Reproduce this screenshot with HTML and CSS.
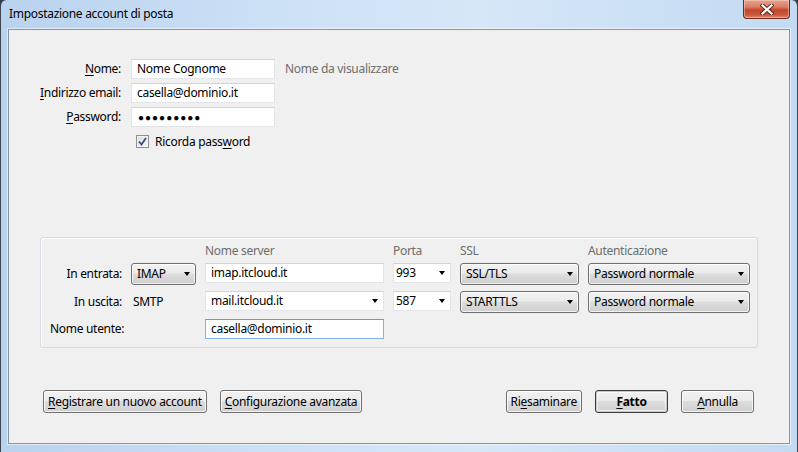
FILE: index.html
```html
<!DOCTYPE html>
<html lang="it">
<head>
<meta charset="utf-8">
<title>Impostazione account di posta</title>
<link rel="stylesheet" href="styles.css">
</head>
<body>
<div class="window">
  <div class="titlebar">
    <span class="title">Impostazione account di posta</span>
    <div class="close">
      <svg width="14" height="11" viewBox="0 0 14 11">
        <path d="M2.5 1.5 L11.5 9.5 M11.5 1.5 L2.5 9.5" stroke="#5a2418" stroke-width="4" stroke-linecap="square"/>
        <path d="M2.5 1.5 L11.5 9.5 M11.5 1.5 L2.5 9.5" stroke="#ffffff" stroke-width="2.2" stroke-linecap="square"/>
      </svg>
    </div>
  </div>
  <div class="client">
    <div class="identity">
      <span class="lbl"><u>N</u>ome:</span>
      <div class="field">Nome Cognome</div>
      <span class="hint">Nome da visualizzare</span>

      <span class="lbl"><u>I</u>ndirizzo email:</span>
      <div class="field">casella@dominio.it</div>
      <span></span>

      <span class="lbl"><u>P</u>assword:</span>
      <div class="field dots">●●●●●●●●●</div>
      <span></span>

      <span></span>
      <div class="check-row">
        <span class="checkbox">
          <svg width="9" height="9" viewBox="0 0 9 9"><path d="M1 4.5 L3.5 7.5 L8 1" fill="none" stroke="#3c4f86" stroke-width="1.8"/></svg>
        </span>
        <span>Ricorda pass<u>w</u>ord</span>
      </div>
    </div>

    <div class="server-box">
      <span></span>
      <span></span>
      <span class="head">Nome server</span>
      <span class="head">Porta</span>
      <span class="head">SSL</span>
      <span class="head">Autenticazione</span>

      <span class="lbl">In entrata:</span>
      <div class="select">IMAP<i class="arrow"></i></div>
      <div class="field">imap.itcloud.it</div>
      <div class="field combo port">993<i class="arrow"></i></div>
      <div class="select">SSL/TLS<i class="arrow"></i></div>
      <div class="select">Password normale<i class="arrow"></i></div>

      <span class="lbl">In uscita:</span>
      <span class="plain">SMTP</span>
      <div class="field combo">mail.itcloud.it<i class="arrow"></i></div>
      <div class="field combo port">587<i class="arrow"></i></div>
      <div class="select">STARTTLS<i class="arrow"></i></div>
      <div class="select">Password normale<i class="arrow"></i></div>

      <span class="lbl-wide">Nome utente:</span>
      <div class="field focused">casella@dominio.it</div>
    </div>

    <div class="buttons">
      <div class="btn-group">
        <div class="btn"><u>R</u>egistrare un nuovo account</div>
        <div class="btn"><u>C</u>onfigurazione avanzata</div>
      </div>
      <div class="btn-group">
        <div class="btn">Ri<u>e</u>saminare</div>
        <div class="btn default"><b><u>F</u>atto</b></div>
        <div class="btn"><u>A</u>nnulla</div>
      </div>
    </div>
  </div>
</div>
</body>
</html>
```

FILE: styles.css
```css
* { box-sizing: border-box; }

html, body {
  margin: 0;
  padding: 0;
  width: 798px;
  height: 452px;
  overflow: hidden;
  background: #2f3b47;
}

body {
  font-family: "Noto Sans", "Open Sans", sans-serif;
  font-size: 12px;
  letter-spacing: -0.3px;
  color: #000;
}

.window {
  width: 798px;
  height: 452px;
  display: flex;
  flex-direction: column;
  background: linear-gradient(to right, #b9d2ee 0%, #cde1f6 35%, #d6e7f8 60%, #c3daf2 100%);
  border-left: 1px solid #3b4652;
  border-right: 1px solid #3b4652;
  border-radius: 6px 6px 0 0;
}

.titlebar {
  height: 29px;
  display: flex;
  align-items: flex-start;
  padding-left: 8px;
  padding-right: 7px;
}

.title {
  margin-top: 6px;
  line-height: 16px;
  color: #000;
}

.close {
  margin-left: auto;
  width: 47px;
  height: 19px;
  border: 1px solid #6b2c20;
  border-top: none;
  border-radius: 0 0 4px 4px;
  background: linear-gradient(to bottom, #e6a594 0%, #d97a62 40%, #c4452c 55%, #c9553a 80%, #dc8a6c 100%);
  box-shadow: inset 0 0 0 1px rgba(255, 220, 200, 0.45);
  display: flex;
  align-items: center;
  justify-content: center;
}

.client {
  margin: 0 7px 0 7px;
  height: 415px;
  background: #f0f0f0;
  border: 1px solid #8595a8;
  box-shadow: 0 0 0 1px rgba(255, 255, 255, 0.55);
  display: flex;
  flex-direction: column;
}

.lbl {
  text-align: right;
  white-space: nowrap;
  line-height: 20px;
}

u { text-decoration: underline; text-underline-offset: 2px; }

.identity {
  margin-top: 29px;
  display: grid;
  grid-template-columns: 112px 144px auto;
  grid-auto-rows: 20px;
  column-gap: 10px;
  row-gap: 4px;
}

.field {
  position: relative;
  height: 20px;
  background: #fff;
  border: 1px solid #e2e5ea;
  border-top-color: #cfd3da;
  padding-left: 5px;
  line-height: 18px;
  white-space: nowrap;
  overflow: hidden;
}

.dots {
  font-size: 10px;
  letter-spacing: 1px;
  padding-left: 6px;
}

.hint {
  color: #6d6d6d;
  line-height: 20px;
}

.check-row {
  grid-column: 2 / 4;
  display: flex;
  align-items: center;
  gap: 6px;
  padding-left: 5px;
}

.checkbox {
  width: 13px;
  height: 13px;
  border: 1px solid #8f8f8f;
  background: linear-gradient(135deg, #dcdcdc, #f8f8f8);
  box-shadow: inset 0 0 0 1px #f4f4f4;
  display: flex;
  align-items: center;
  justify-content: center;
}

.server-box {
  margin: 86px 0 0 31px;
  width: 718px;
  border: 1px solid #d5dbe2;
  border-radius: 3px;
  box-shadow: inset 1px 1px 0 #fff;
  padding: 5px 0 6px 0;
  display: grid;
  grid-template-columns: 81px 65px 179px 58px 119px 162px;
  grid-template-rows: 14px 22px 22px 22px;
  column-gap: 9px;
  row-gap: 6px;
  align-items: start;
}

.head {
  color: #6d6d6d;
  line-height: 16px;
}

.server-box .lbl {
  line-height: 22px;
}

.plain {
  line-height: 22px;
  padding-left: 2px;
}

.lbl-wide {
  grid-column: 1 / 3;
  padding-left: 9px;
  line-height: 20px;
}

.select {
  position: relative;
  height: 22px;
  border: 1px solid #707070;
  border-radius: 3px;
  background: linear-gradient(to bottom, #f2f2f2 0%, #ebebeb 45%, #dddddd 50%, #cfcfcf 100%);
  box-shadow: inset 0 0 0 1px rgba(255, 255, 255, 0.7);
  padding-left: 5px;
  line-height: 20px;
  white-space: nowrap;
}

.combo { padding-right: 16px; }
.port { padding-left: 2px; }

.arrow {
  position: absolute;
  right: 5px;
  top: 50%;
  margin-top: -2px;
  width: 0;
  height: 0;
  border-left: 3.5px solid transparent;
  border-right: 3.5px solid transparent;
  border-top: 4px solid #000;
}

.focused {
  border-color: #7eb4ea;
  border-top-color: #569de5;
}

.buttons {
  margin-top: 42px;
  display: flex;
  justify-content: space-between;
  padding: 0 35px 0 34px;
}

.btn-group {
  display: flex;
  gap: 13px;
}

.btn {
  height: 23px;
  min-width: 73px;
  padding: 0 4px;
  border: 1px solid #707070;
  border-radius: 3px;
  background: linear-gradient(to bottom, #f2f2f2 0%, #ebebeb 45%, #dddddd 50%, #cfcfcf 100%);
  box-shadow: inset 0 0 0 1px rgba(255, 255, 255, 0.75);
  text-align: center;
  line-height: 21px;
  white-space: nowrap;
}

.btn.default {
  border-color: #3c3c3c;
  box-shadow: inset 0 0 0 1px #c8c8c8, inset 0 0 0 2px rgba(255,255,255,0.6);
}
```
